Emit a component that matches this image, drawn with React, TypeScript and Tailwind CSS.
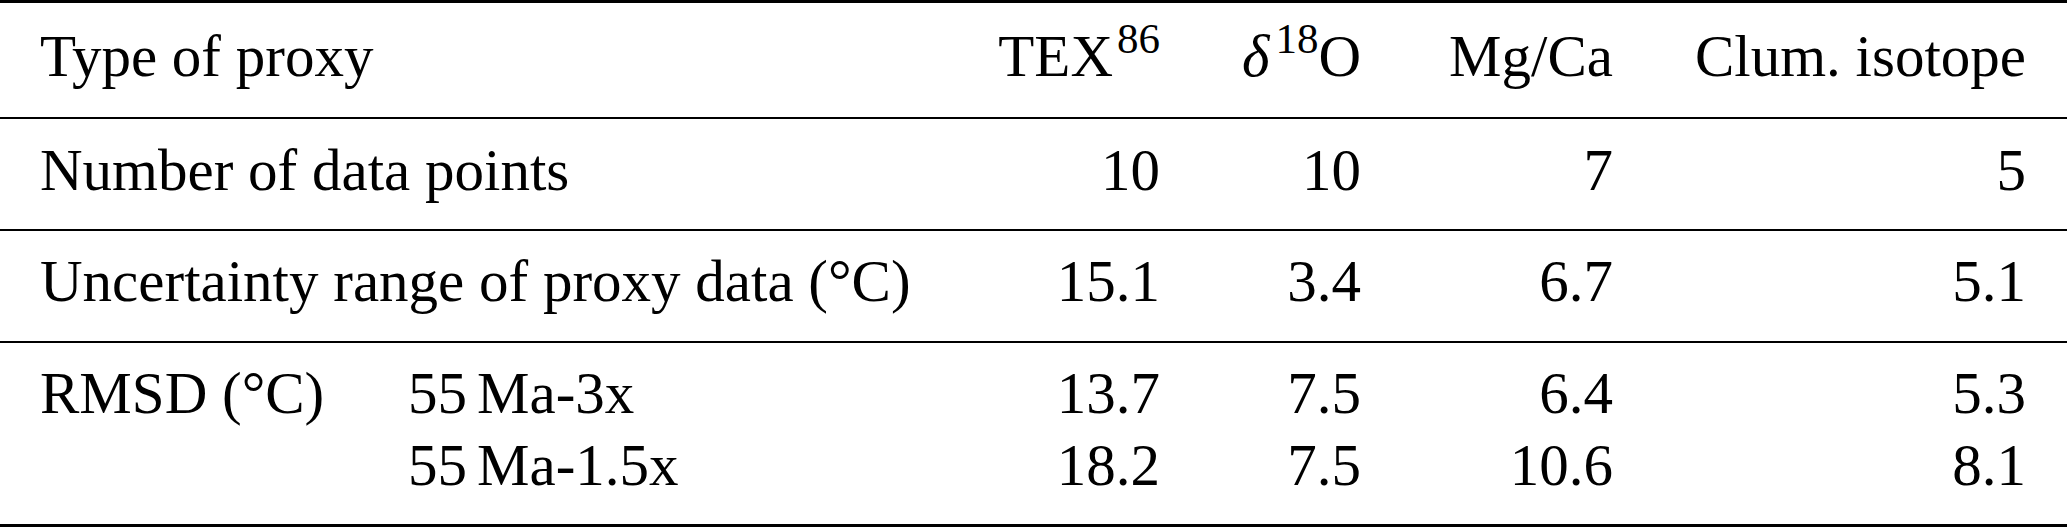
const Sup = ({ children }: { children: React.ReactNode }) => (
  <span className="text-[43px] leading-[0] align-[23px]">{children}</span>
);

const App = () => {
  // right-aligned numeric columns: TEX86, d18O, Mg/Ca, clumped isotope
  const cols = ['w-[165px]', 'w-[201px]', 'w-[252px]', 'w-[413px]'];

  const rmsd = [
    { run: 'Ma-3x', vals: ['13.7', '7.5', '6.4', '5.3'] },
    { run: 'Ma-1.5x', vals: ['18.2', '7.5', '10.6', '8.1'] },
  ];

  return (
    <div
      className="w-[2067px] h-[528px] bg-white text-black text-[59px] leading-[59px]"
      style={{ fontFamily: '"Liberation Serif", "Times New Roman", serif' }}
    >
      <div className="border-t-[3px] border-black" />

      {/* header */}
      <div className="flex h-[114px] pt-[24px] pl-[40px] pr-[41px]">
        <div className="w-[955px]">Type of proxy</div>
        <div className={`${cols[0]} text-right`}>
          TEX<span className="ml-[4px]" />
          <Sup>86</Sup>
        </div>
        <div className={`${cols[1]} text-right`}>
          <span className="italic mr-[6px]">δ</span>
          <Sup>18</Sup>O
        </div>
        <div className={`${cols[2]} text-right`}>Mg/Ca</div>
        <div className={`${cols[3]} text-right`}>Clum. isotope</div>
      </div>

      <div className="border-t-2 border-black" />

      <div className="flex h-[110px] pt-[22px] pl-[40px] pr-[41px]">
        <div className="w-[955px]">Number of data points</div>
        <div className={`${cols[0]} text-right`}>10</div>
        <div className={`${cols[1]} text-right`}>10</div>
        <div className={`${cols[2]} text-right`}>7</div>
        <div className={`${cols[3]} text-right`}>5</div>
      </div>

      <div className="border-t-2 border-black" />

      <div className="flex h-[110px] pt-[21px] pl-[40px] pr-[41px]">
        <div className="w-[955px]">Uncertainty range of proxy data (°C)</div>
        <div className={`${cols[0]} text-right`}>15.1</div>
        <div className={`${cols[1]} text-right`}>3.4</div>
        <div className={`${cols[2]} text-right`}>6.7</div>
        <div className={`${cols[3]} text-right`}>5.1</div>
      </div>

      <div className="border-t-2 border-black" />

      <div className="h-[181px] pt-[14px] leading-[72px]">
        {rmsd.map((r, i) => (
          <div key={r.run} className="flex pl-[40px] pr-[41px]">
            <div className="w-[368px]">{i === 0 ? 'RMSD (°C)' : ''}</div>
            <div className="w-[587px]">
              55<span className="ml-[10px]">{r.run}</span>
            </div>
            {r.vals.map((v, j) => (
              <div key={j} className={`${cols[j]} text-right`}>
                {v}
              </div>
            ))}
          </div>
        ))}
      </div>

      <div className="border-t-[3px] border-black" />
    </div>
  );
};

export default App;
